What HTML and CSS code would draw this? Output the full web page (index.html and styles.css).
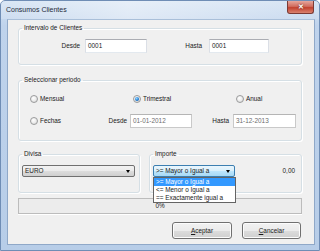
FILE: index.html
```html
<!DOCTYPE html>
<html lang="es">
<head>
  <meta charset="UTF-8" />
  <title>Consumos Clientes</title>
  <link rel="stylesheet" href="styles.css">
</head>
<body>
  <div class="window">
    <!-- ===== Title bar ===== -->
    <div class="titlebar">
      <span class="title">Consumos Clientes</span>
      <button class="close-btn">&#x2715;</button>
    </div>

    <!-- ===== Client area ===== -->
    <div class="client">
      <fieldset class="group g-intervalo">
        <legend>Intervalo de Clientes</legend>
        <div class="row-range">
          <label class="lbl lbl-desde">Desde</label>
          <div class="textbox tb-desde">0001</div>
          <label class="lbl lbl-hasta">Hasta</label>
          <div class="textbox tb-hasta">0001</div>
        </div>
      </fieldset>

      <fieldset class="group g-periodo">
        <legend>Seleccionar periodo</legend>
        <div class="periodo-body">
          <div class="row-radios">
            <div class="opt"><span class="radio"></span>Mensual</div>
            <div class="opt"><span class="radio checked"></span>Trimestral</div>
            <div class="opt"><span class="radio"></span>Anual</div>
          </div>
          <div class="row-fechas">
            <div class="opt opt-fechas"><span class="radio"></span>Fechas</div>
            <label class="lbl lbl-fdesde">Desde</label>
            <div class="textbox disabled tb-fdesde">01-01-2012</div>
            <label class="lbl lbl-fhasta">Hasta</label>
            <div class="textbox disabled tb-fhasta">31-12-2013</div>
          </div>
        </div>
      </fieldset>

      <div class="row-groups">
        <fieldset class="group g-divisa">
          <legend>Divisa</legend>
          <div class="combo cb-divisa">EURO<span class="arrow"></span></div>
        </fieldset>
        <fieldset class="group g-importe">
          <legend>Importe</legend>
          <div class="importe-row">
            <div class="combo-wrap">
              <div class="combo focused cb-importe">&gt;= Mayor o Igual a<span class="arrow"></span></div>
              <ul class="dropdown">
                <li class="selected">&gt;= Mayor o Igual a</li>
                <li>&lt;= Menor o Igual a</li>
                <li>== Exactamente igual a</li>
              </ul>
            </div>
            <div class="amount">0,00</div>
          </div>
        </fieldset>
      </div>

      <div class="progress">0%</div>

      <div class="buttons">
        <button class="btn btn-ok"><u>A</u>ceptar</button>
        <button class="btn btn-cancel"><u>C</u>ancelar</button>
      </div>
    </div>
  </div>
</body>
</html>
```

FILE: styles.css
```css
/* --- Reset & base ---------------------------------------------------- */
* { box-sizing: border-box; margin: 0; padding: 0; }
body { font-family: "Liberation Sans", Arial, sans-serif; font-size: 6.4px; line-height: 8px; color: #1a1a1a; background: #fff; }
button { font: inherit; color: inherit; }

/* --- Window frame ---------------------------------------------------- */
.window {
  width: 320px;
  height: 251px;
  display: flex;
  flex-direction: column;
  background: linear-gradient(180deg, #d3e2f3 0%, #bfd3ec 10%, #b7cde8 100%);
  border: 1px solid #6f8db5;
  border-radius: 5px 5px 0 0;
}
.titlebar {
  height: 18px;
  display: flex;
  justify-content: space-between;
  align-items: flex-start;
  padding-left: 5px;
  background: linear-gradient(90deg, rgba(255,255,255,.15), rgba(255,255,255,.45) 40%, rgba(255,255,255,.1));
}
.title { font-size: 7px; line-height: 18px; color: #1e2a3a; }
.close-btn {
  width: 27px; height: 13px; margin-right: 5px;
  border: 1px solid #7b3a34; border-top: none; border-radius: 0 0 3px 3px;
  background: linear-gradient(180deg, #e6a79d 0%, #d06c5e 45%, #c2422f 55%, #d9826f 100%);
  color: #fff; font-size: 7px; font-weight: 700; line-height: 12px;
  text-shadow: 0 0 2px #5a1a12;
}

/* --- Client area ----------------------------------------------------- */
.client {
  flex: 1;
  margin: 0 4px 5px 6px;
  padding: 4px 12px 0 10px;
  background: #f0f0f0;
  border: 1px solid #8fa8c8;
  border-top-color: #a9bfd9;
  display: flex;
  flex-direction: column;
}

/* --- Group boxes ----------------------------------------------------- */
.group {
  padding: 0;
  border: 1px solid #d5dfe5;
  border-radius: 3px;
  box-shadow: inset 1px 1px 0 #fff, 1px 1px 0 #fff;
  min-width: 0;
}
.group legend { margin-left: 3px; padding: 0 2px; line-height: 8px; color: #1a1a1a; }

.row-range { display: flex; align-items: center; padding: 7px 0 11px 0; }
.lbl { text-align: right; }
.lbl-desde { width: 61px; margin-right: 5px; }
.tb-desde { width: 62px; }
.lbl-hasta { width: 55px; margin-right: 7px; }
.tb-hasta { width: 60px; }

.textbox {
  height: 14px;
  padding-left: 2px;
  line-height: 12px;
  background: #fff;
  border: 1px solid #dbdfe6;
  border-top-color: #abadb3;
  border-bottom-color: #e3e9ef;
}
.textbox.disabled { color: #6d6d6d; border-color: #c9c9c9; border-top-color: #b5b5b5; }

.g-periodo { margin-top: 11px; }
.periodo-body { padding: 8px 0 12px 11px; }
.row-radios { display: flex; height: 14px; align-items: center; }
.row-radios .opt { width: 103px; flex-shrink: 0; }
.row-radios .opt:last-child { width: auto; }
.opt { display: flex; align-items: center; }
.radio {
  width: 8px; height: 8px; margin-right: 2px; border-radius: 50%;
  border: 1px solid #9a9b9c;
  background: radial-gradient(circle at 40% 35%, #ffffff 0%, #ececec 50%, #d0d0d0 100%);
  display: flex; align-items: center; justify-content: center;
}
.radio.checked::after {
  content: ""; width: 4px; height: 4px; border-radius: 50%;
  background: radial-gradient(circle at 40% 35%, #9ad8ff 0%, #1f7fd6 55%, #0d3f85 100%);
}
.row-fechas { display: flex; align-items: center; margin-top: 8px; height: 14px; }
.opt-fechas { width: 70px; }
.lbl-fdesde { width: 27px; margin-right: 3px; }
.tb-fdesde { width: 62px; }
.lbl-fhasta { width: 37px; margin-right: 4px; }
.tb-fhasta { width: 63px; }

/* --- Divisa / Importe ------------------------------------------------ */
.row-groups { display: flex; gap: 9px; margin-top: 9px; }
.g-divisa { width: 122px; }
.g-importe { flex: 1; }
.cb-divisa { margin: 7px 0 15px 3px; }
.importe-row { display: flex; align-items: center; padding: 7px 6px 15px 3px; }
.combo-wrap { position: relative; }
.combo {
  height: 12px;
  padding: 0 4px 0 2px;
  line-height: 10px;
  border: 1px solid #707070;
  border-radius: 2px;
  background: linear-gradient(180deg, #f2f2f2 0%, #ebebeb 50%, #dddddd 50%, #cfcfcf 100%);
  display: flex;
  justify-content: space-between;
  align-items: center;
}
.cb-divisa { width: 113px; }
.cb-importe { width: 82px; }
.combo.focused {
  border-color: #3c7fb1;
  background: linear-gradient(180deg, #eaf6fd 0%, #d9f0fc 50%, #bee6fd 50%, #a7d9f5 100%);
}
.arrow { width: 0; height: 0; border-left: 2.5px solid transparent; border-right: 2.5px solid transparent; border-top: 3px solid #000; }
.amount { flex: 1; text-align: right; }

.dropdown {
  position: absolute;
  top: 12px;
  left: 0;
  width: 83px;
  list-style: none;
  background: #fff;
  border: 1px solid #646464;
  z-index: 5;
}
.dropdown li { height: 8px; padding-left: 2px; line-height: 8px; }
.dropdown li.selected { background: #3399ff; color: #fff; }

/* --- Progress & buttons ---------------------------------------------- */
.progress {
  margin-top: 5px;
  height: 16px;
  border: 1px solid #bcbcbc;
  background: #ececec;
  box-shadow: 0 1px 0 #fff;
  text-align: center;
  line-height: 14px;
}
.buttons { display: flex; justify-content: flex-end; gap: 10px; margin-top: 8px; padding-right: 1px; }
.btn {
  height: 17px;
  border: 1px solid #707070;
  border-radius: 3px;
  background: linear-gradient(180deg, #f2f2f2 0%, #ebebeb 50%, #dddddd 50%, #cfcfcf 100%);
  box-shadow: inset 0 0 0 1px #fcfcfc;
}
.btn-ok { width: 60px; }
.btn-cancel { width: 59px; }
```
